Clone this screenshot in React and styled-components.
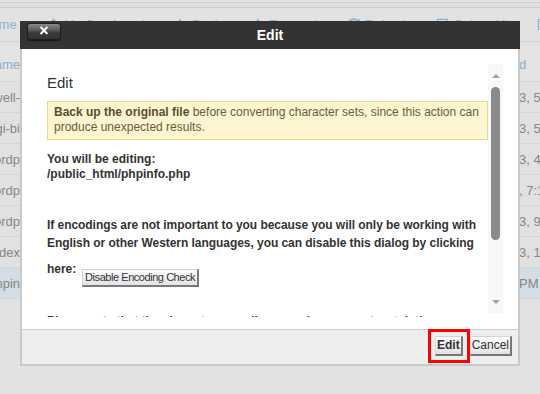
import React from 'react'
import styled, { createGlobalStyle } from 'styled-components'
import { FaArrowUp, FaArrowLeft, FaArrowRight, FaSyncAlt, FaRegCheckSquare, FaRegSquare } from 'react-icons/fa'

const GlobalStyle = createGlobalStyle`
    body{
        margin: 0;
        background: #e2e2e2;
        font-family: 'Liberation Sans', Arial, sans-serif;
    }
`

const tools = [
    {icon: null, label: 'Home'},
    {icon: <FaArrowUp/>, label: 'Up One Level'},
    {icon: <FaArrowLeft/>, label: 'Back'},
    {icon: <FaArrowRight/>, label: 'Forward'},
    {icon: <FaSyncAlt/>, label: 'Reload'},
    {icon: <FaRegCheckSquare/>, label: 'Select All'},
    {icon: <FaRegSquare/>, label: 'Unselect All'},
]

const files = [
    {name: 'swell-', date: '3, 5:14 PM'},
    {name: 'cgi-bi', date: '3, 5:12 PM'},
    {name: 'wordp', date: '3, 4:02 PM'},
    {name: 'wordp', date: ', 7:15 PM'},
    {name: 'wordp', date: '3, 9:40 AM'},
    {name: 'index', date: '3, 11:05 AM'},
    {name: 'phpin', date: 'PM', active: true},
]

export default function App(){
    return(
        <Page>
            <GlobalStyle/>
            <TopStrip/>
            <Toolbar>
                {tools.map(t => (
                    <ToolItem key={t.label}>{t.icon}<span>{t.label}</span></ToolItem>
                ))}
            </Toolbar>
            <FileTable>
                <Row $header>
                    <NameCell $header><span>Name</span></NameCell>
                    <div/>
                    <DateCell $header>d</DateCell>
                </Row>
                {files.map((f, i) => (
                    <Row key={i} $active={f.active}>
                        <NameCell><span>{f.name}</span></NameCell>
                        <div/>
                        <DateCell>{f.date}</DateCell>
                    </Row>
                ))}
            </FileTable>

            <Dialog>
                <DialogHeader>
                    <CloseButton>×</CloseButton>
                    <DialogTitle>Edit</DialogTitle>
                    <div/>
                </DialogHeader>
                <DialogBody>
                    <ScrollPane>
                        <Content>
                            <Heading>Edit</Heading>
                            <Warning>
                                <strong>Back up the original file</strong> before converting character sets, since this action can produce unexpected results.
                            </Warning>
                            <FilePath>
                                You will be editing:<br/>
                                /public_html/phpinfo.php
                            </FilePath>
                            <Paragraph>
                                If encodings are not important to you because you will only be working with English or other Western languages, you can disable this dialog by clicking here:
                                <SmallButton>Disable Encoding Check</SmallButton>
                            </Paragraph>
                            <Paragraph $next>
                                Please note that the character encoding you choose must match the encoding of this file.
                            </Paragraph>
                        </Content>
                    </ScrollPane>
                    <ScrollTrack>
                        <Arrow/>
                        <Thumb/>
                        <Arrow $down/>
                    </ScrollTrack>
                </DialogBody>
                <DialogFooter>
                    <FooterButton $primary>Edit</FooterButton>
                    <FooterButton>Cancel</FooterButton>
                </DialogFooter>
            </Dialog>
        </Page>
    )
}

const Page = styled.div`
    position: relative;
    width: 540px;
    height: 394px;
    overflow: hidden;
    background: #e2e2e2;
`
const TopStrip = styled.div`
    margin-top: 2px;
    height: 6px;
    box-sizing: border-box;
    border-top: 1px solid #cdcdcd;
    border-bottom: 1px solid #cdcdcd;
    background: #dfdfdf;
`
const Toolbar = styled.div`
    height: 34px;
    box-sizing: border-box;
    border-bottom: 1px solid #d2d2d2;
    display: flex;
    align-items: center;
    gap: 30px;
    margin-left: -18px;
    white-space: nowrap;
`
const ToolItem = styled.div`
    display: flex;
    align-items: center;
    gap: 5px;
    color: #8db2d2;
    font-size: 13px;
    svg{
        font-size: 13px;
    }
`
const FileTable = styled.div`
    margin-top: 5px;
`
const Row = styled.div`
    display: grid;
    grid-template-columns: 20px 1fr 21px;
    height: ${p => p.$header ? '35px' : '31px'};
    box-sizing: border-box;
    border-bottom: 1px solid #d5d5d5;
    background: ${p => p.$active ? '#d2dde6' : p.$header ? '#e4e4e4' : '#e1e1e1'};
    font-size: 13px;
    color: #868686;
`
const NameCell = styled.div`
    display: flex;
    justify-content: flex-end;
    align-items: center;
    overflow: hidden;
    white-space: nowrap;
    color: ${p => p.$header ? '#88aecf' : '#868686'};
`
const DateCell = styled.div`
    display: flex;
    align-items: center;
    overflow: hidden;
    white-space: nowrap;
    color: ${p => p.$header ? '#88aecf' : '#868686'};
`

const Dialog = styled.div`
    position: absolute;
    left: 20px;
    top: 21px;
    width: 500px;
    display: flex;
    flex-direction: column;
    font-family: 'Liberation Sans', Arial, sans-serif;
`
const DialogHeader = styled.div`
    height: 28px;
    background: #333333;
    display: grid;
    grid-template-columns: 1fr auto 1fr;
    align-items: start;
    padding: 2px 7px 0;
    box-sizing: border-box;
`
const CloseButton = styled.div`
    width: 34px;
    height: 17px;
    box-sizing: border-box;
    border: 1px solid #1e1e1e;
    border-radius: 3px;
    background: linear-gradient(#8a8a8a 0%, #555 45%, #3c3c3c 55%, #333 100%);
    box-shadow: 0 1px 1px rgba(0,0,0,0.6);
    color: #fff;
    font-weight: bold;
    font-size: 16px;
    line-height: 14px;
    text-align: center;
`
const DialogTitle = styled.div`
    color: #fff;
    font-weight: bold;
    font-size: 14px;
    line-height: 24px;
`
const DialogBody = styled.div`
    display: flex;
    background: #ffffff;
    border-left: 2px solid #c9c9c9;
    border-right: 2px solid #c9c9c9;
    padding: 15px 15px 12px 25px;
    height: 280px;
    box-sizing: border-box;
`
const ScrollPane = styled.div`
    flex: 1;
    overflow: hidden;
`
const Content = styled.div`
    padding-top: 10px;
    color: #333;
    font-size: 12px;
`
const Heading = styled.div`
    font-size: 15px;
    line-height: 18px;
    color: #333;
`
const Warning = styled.div`
    margin-top: 9px;
    border: 1px solid #e6d98a;
    background: #fdf5cf;
    padding: 3px 6px 4px;
    line-height: 15px;
    color: #6b5d3a;
    strong{
        color: #5b4f30;
    }
`
const FilePath = styled.div`
    margin-top: 12px;
    font-weight: bold;
    line-height: 15px;
`
const Paragraph = styled.div`
    margin-top: ${p => p.$next ? '25px' : '34px'};
    font-weight: bold;
    line-height: 18px;
    letter-spacing: -0.05px;
`
const SmallButton = styled.span`
    display: inline-block;
    margin: 17px 0 0 6px;
    vertical-align: -8px;
    height: 18px;
    box-sizing: border-box;
    padding: 0 2px;
    line-height: 15px;
    font-size: 11px;
    letter-spacing: -0.45px;
    font-weight: normal;
    color: #333;
    background: linear-gradient(#fafafa, #e4e4e4);
    border: 1px solid #d0d0d0;
    border-right: 2px solid #7a7a7a;
    border-bottom: 2px solid #7a7a7a;
`
const ScrollTrack = styled.div`
    width: 15px;
    margin-bottom: 4px;
    background: #f8f8f8;
    display: flex;
    flex-direction: column;
    align-items: center;
    padding: 10px 0 9px;
    box-sizing: border-box;
`
const Arrow = styled.div`
    width: 0;
    height: 0;
    border-left: 4px solid transparent;
    border-right: 4px solid transparent;
    ${p => p.$down ? 'border-top: 4px solid #a3a3a3; margin-top: auto;' : 'border-bottom: 4px solid #a3a3a3;'}
`
const Thumb = styled.div`
    margin-top: 9px;
    width: 9px;
    height: 153px;
    border-radius: 5px;
    background: #8a8a8a;
`
const DialogFooter = styled.div`
    height: 37px;
    box-sizing: border-box;
    background: #eeeeee;
    border-top: 1px solid #cfcfcf;
    border-left: 2px solid #c9c9c9;
    border-right: 2px solid #c9c9c9;
    border-bottom: 2px solid #c9c9c9;
    display: flex;
    justify-content: flex-end;
    align-items: center;
    gap: 7px;
    padding: 0 6px 2px 0;
`
const FooterButton = styled.div`
    height: 20px;
    box-sizing: border-box;
    padding: 0 1px;
    line-height: 17px;
    font-size: 12px;
    font-weight: ${p => p.$primary ? 'bold' : 'normal'};
    color: #333;
    background: linear-gradient(#fcfcfc, #e2e2e2);
    border: 1px solid #d6d6d6;
    border-right: 2px solid #777;
    border-bottom: 2px solid #777;
    outline: ${p => p.$primary ? '3px solid #ff0000' : 'none'};
    outline-offset: 4px;
`
